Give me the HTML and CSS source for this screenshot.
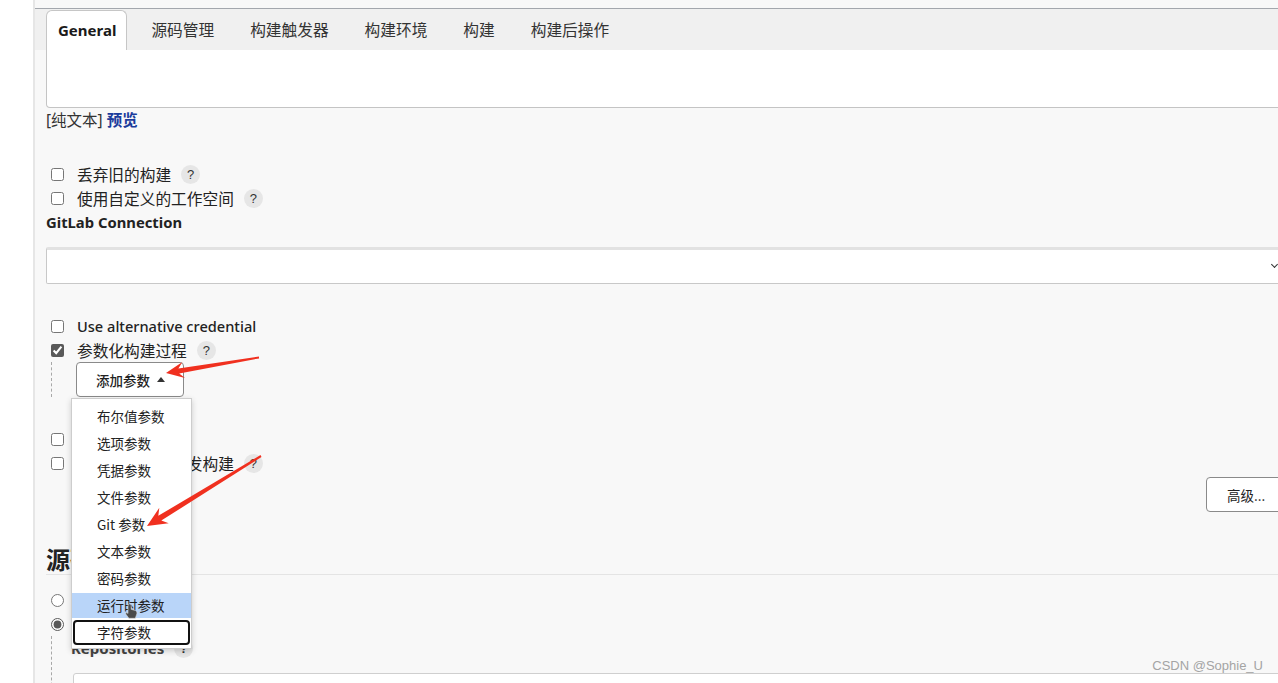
FILE: index.html
```html
<!DOCTYPE html>
<html lang="zh-CN">
<head>
<meta charset="utf-8">
<title>Jenkins 配置</title>
<link rel="stylesheet" href="styles.css">
</head>
<body>
<div class="page">
  <aside class="sidebar"></aside>
  <main class="main">
    <nav class="tabbar">
      <span class="tab active">General</span>
      <span class="tab">源码管理</span>
      <span class="tab">构建触发器</span>
      <span class="tab">构建环境</span>
      <span class="tab">构建</span>
      <span class="tab">构建后操作</span>
    </nav>
    <div class="content">
      <div class="desc-box"></div>
      <div class="desc-links">[纯文本] <a class="preview">预览</a></div>

      <div class="opts opts-first">
        <label class="check-row"><input type="checkbox"><span>丢弃旧的构建</span><span class="help">?</span></label>
        <label class="check-row"><input type="checkbox"><span>使用自定义的工作空间</span><span class="help">?</span></label>
      </div>

      <div class="field-title">GitLab Connection</div>
      <div class="select-box"><span class="chev"></span></div>

      <div class="opts opts-second">
        <label class="check-row latin"><input type="checkbox"><span>Use alternative credential</span></label>
        <label class="check-row"><input type="checkbox" checked><span>参数化构建过程</span><span class="help">?</span></label>
      </div>
      <div class="param-block">
        <button class="add-btn">添加参数 <span class="caret"></span></button>
      </div>

      <div class="opts opts-third">
        <label class="check-row"><input type="checkbox"><span>关闭构建</span></label>
        <label class="check-row"><input type="checkbox"><span>在必要的时候并发构建</span><span class="help">?</span></label>
      </div>

      <div class="adv-row"><button class="adv-btn">高级...</button></div>

      <h2 class="section-title">源码管理</h2>
      <div class="opts opts-radio">
        <label class="check-row"><input type="radio" name="scm"><span>无</span></label>
        <label class="check-row"><input type="radio" name="scm" checked><span>Git</span></label>
      </div>
      <div class="repo-block">
        <div class="repo-title"><span>Repositories</span><span class="help">?</span></div>
        <div class="repo-input"></div>
      </div>
    </div>
  </main>

  <ul class="menu">
    <li class="item">布尔值参数</li>
    <li class="item">选项参数</li>
    <li class="item">凭据参数</li>
    <li class="item">文件参数</li>
    <li class="item">Git 参数</li>
    <li class="item">文本参数</li>
    <li class="item">密码参数</li>
    <li class="item hover">运行时参数</li>
    <li class="item focus">字符参数</li>
  </ul>

  <div class="watermark">CSDN @Sophie_U</div>

  <svg class="overlay" width="1278" height="683" viewBox="0 0 1278 683">
    <polygon fill="#f0301f" points="166,373 185,377.9 179.2,373.4 259.1,358.4 258.9,356.6 178.4,368.4 182.4,362.1"/>
    <polygon fill="#f0301f" points="147,526 168.7,523.2 161.3,520.6 261.5,456.9 260.5,455.1 158.3,515.8 159.3,507.8"/>
    <path d="M128 604.5 q1.6-1.2 3.2 0 v4.8 l4.6 1.4 q1.6 .8 1.1 3 l-1.6 4.6 h-6.4 l-3.1-4.2 q-.6-1.6 1.1-1.6 l1.1 1 z" fill="#4a4a4a" stroke="#d8d8d8" stroke-width=".6"/>
  </svg>
</div>
</body>
</html>
```

FILE: styles.css
```css
* { box-sizing: border-box; }

html, body {
  margin: 0;
  padding: 0;
}

body {
  width: 1278px;
  height: 683px;
  overflow: hidden;
  background: #f8f8f8;
  font-family: "Noto Sans", "Noto Sans CJK SC", sans-serif;
  color: #222;
}

.page {
  position: relative;
  display: flex;
  height: 683px;
}

.sidebar {
  flex: none;
  width: 35px;
  background: #fff;
  border-right: 2px solid #e6e6e6;
}

.main {
  flex: 1;
  min-width: 0;
  overflow: hidden;
}

/* tabs */
.tabbar {
  margin-top: 8px;
  height: 42px;
  border-top: 1px solid #a3a7ad;
  background: #f0f0f0;
  display: flex;
  align-items: flex-end;
  gap: 12px;
  padding-left: 11px;
}

.tab {
  height: 40px;
  line-height: 39px;
  padding: 0 11px;
  border: 1px solid transparent;
  border-bottom: 0;
  font-size: 15.7px;
  color: #333;
  white-space: nowrap;
}

.tab.active {
  padding: 0 10px 0 11px;
  background: #fff;
  border-color: #c6c6c6;
  border-radius: 6px 6px 0 0;
  font-weight: 700;
  color: #1a1a1a;
  font-size: 15px;
}

.content {
  width: 1251px;
  padding-left: 11px;
}

.desc-box {
  height: 58px;
  background: #fff;
  border: 1px solid #c4c4c4;
  border-top: 0;
  border-radius: 0 0 4px 4px;
}

.desc-links {
  margin-top: 2px;
  height: 20px;
  line-height: 20px;
  font-size: 15.5px;
  color: #333;
}

.preview {
  color: #1b3c9c;
  font-weight: 700;
}

/* checkbox rows */
.opts-first { margin-top: 32px; }
.opts-second { margin-top: 30px; }
.opts-third { margin-top: 30px; }
.opts-radio { margin-top: 13px; }

.check-row {
  display: flex;
  align-items: center;
  height: 24px;
  padding-left: 5px;
  font-size: 15.7px;
  color: #222;
}

.check-row input {
  margin: 0 13px 0 0;
  width: 13px;
  height: 13px;
  accent-color: #595959;
}

.check-row.latin {
  font-size: 14.6px;
  font-weight: 500;
}

.help {
  flex: none;
  width: 19px;
  height: 19px;
  margin-left: 10px;
  border-radius: 50%;
  background: #e6e6e6;
  font-size: 13px;
  line-height: 19px;
  text-align: center;
  color: #333;
  font-family: "Liberation Sans", sans-serif;
}

.field-title {
  margin-top: 2px;
  height: 20px;
  line-height: 20px;
  font-size: 14.8px;
  font-weight: 700;
  color: #222;
}

.select-box {
  position: relative;
  margin-top: 15px;
  height: 37px;
  background: #fff;
  border: 1px solid #c8c8c8;
  border-top: 3px solid #e2e2e2;
  border-radius: 2px;
}

.chev {
  position: absolute;
  right: 8px;
  top: 12px;
  width: 5px;
  height: 5px;
  border-right: 1.3px solid #333;
  border-bottom: 1.3px solid #333;
  transform: rotate(45deg);
}

/* parameter block */
.param-block {
  margin-left: 5px;
  padding-left: 24px;
  border-left: 1px dashed #a8a8a8;
  height: 35px;
}

.add-btn {
  height: 35px;
  width: 108px;
  padding: 0 0 0 19px;
  display: flex;
  align-items: center;
  gap: 7px;
  background: #fff;
  border: 1px solid #8a8a8a;
  border-radius: 4px;
  font-family: "Noto Sans CJK SC", sans-serif;
  font-size: 13.5px;
  font-weight: 500;
  color: #222;
}

.caret {
  width: 0;
  height: 0;
  border-left: 4px solid transparent;
  border-right: 4px solid transparent;
  border-bottom: 5px solid #333;
}

.adv-row {
  margin-top: 2px;
  display: flex;
  justify-content: flex-end;
}

.adv-btn {
  height: 35px;
  width: 80px;
  margin-right: 0;
  padding: 0 0 0 20px;
  text-align: left;
  background: #fff;
  border: 1px solid #8a8a8a;
  border-radius: 4px;
  font-family: "Noto Sans CJK SC", sans-serif;
  font-size: 13.5px;
  color: #222;
}

.section-title {
  margin: 33px 0 0;
  height: 30px;
  line-height: 29px;
  font-size: 24px;
  font-weight: 700;
  color: #222;
  border-bottom: 1px solid #e4e4e4;
}

.repo-block {
  margin-left: 5px;
  padding-left: 19px;
  border-left: 1px dashed #a8a8a8;
  height: 60px;
}

.repo-title {
  display: flex;
  align-items: center;
  height: 24px;
  font-size: 15px;
  font-weight: 700;
  color: #444;
}

.repo-input {
  margin-top: 13px;
  margin-left: 2px;
  height: 40px;
  background: #fff;
  border: 1px solid #cfcfcf;
  border-radius: 3px;
}

/* dropdown menu */
.menu {
  position: absolute;
  left: 71px;
  top: 398px;
  width: 121px;
  height: 251px;
  margin: 0;
  padding: 3.5px 0 0;
  list-style: none;
  display: flex;
  flex-direction: column;
  background: #fff;
  border: 1px solid #cdcdcd;
  box-shadow: 0 2px 6px rgba(0, 0, 0, 0.18);
  font-family: "Noto Sans CJK SC", sans-serif;
  font-size: 13.5px;
  color: #222;
}

.item {
  flex: none;
  height: 25px;
  line-height: 25px;
  margin: 1px 0;
  padding-left: 25px;
  white-space: nowrap;
}

.item.hover {
  background: #b9d5f9;
}

.item.focus {
  margin: 1px 1px;
  border: 2px solid #111;
  border-radius: 4px;
  line-height: 21px;
  padding-left: 22px;
}

.watermark {
  position: absolute;
  right: 15px;
  top: 658px;
  font-family: "Liberation Sans", sans-serif;
  font-size: 13px;
  color: #a4a4a4;
}

.overlay {
  position: absolute;
  left: 0;
  top: 0;
  pointer-events: none;
}
```
